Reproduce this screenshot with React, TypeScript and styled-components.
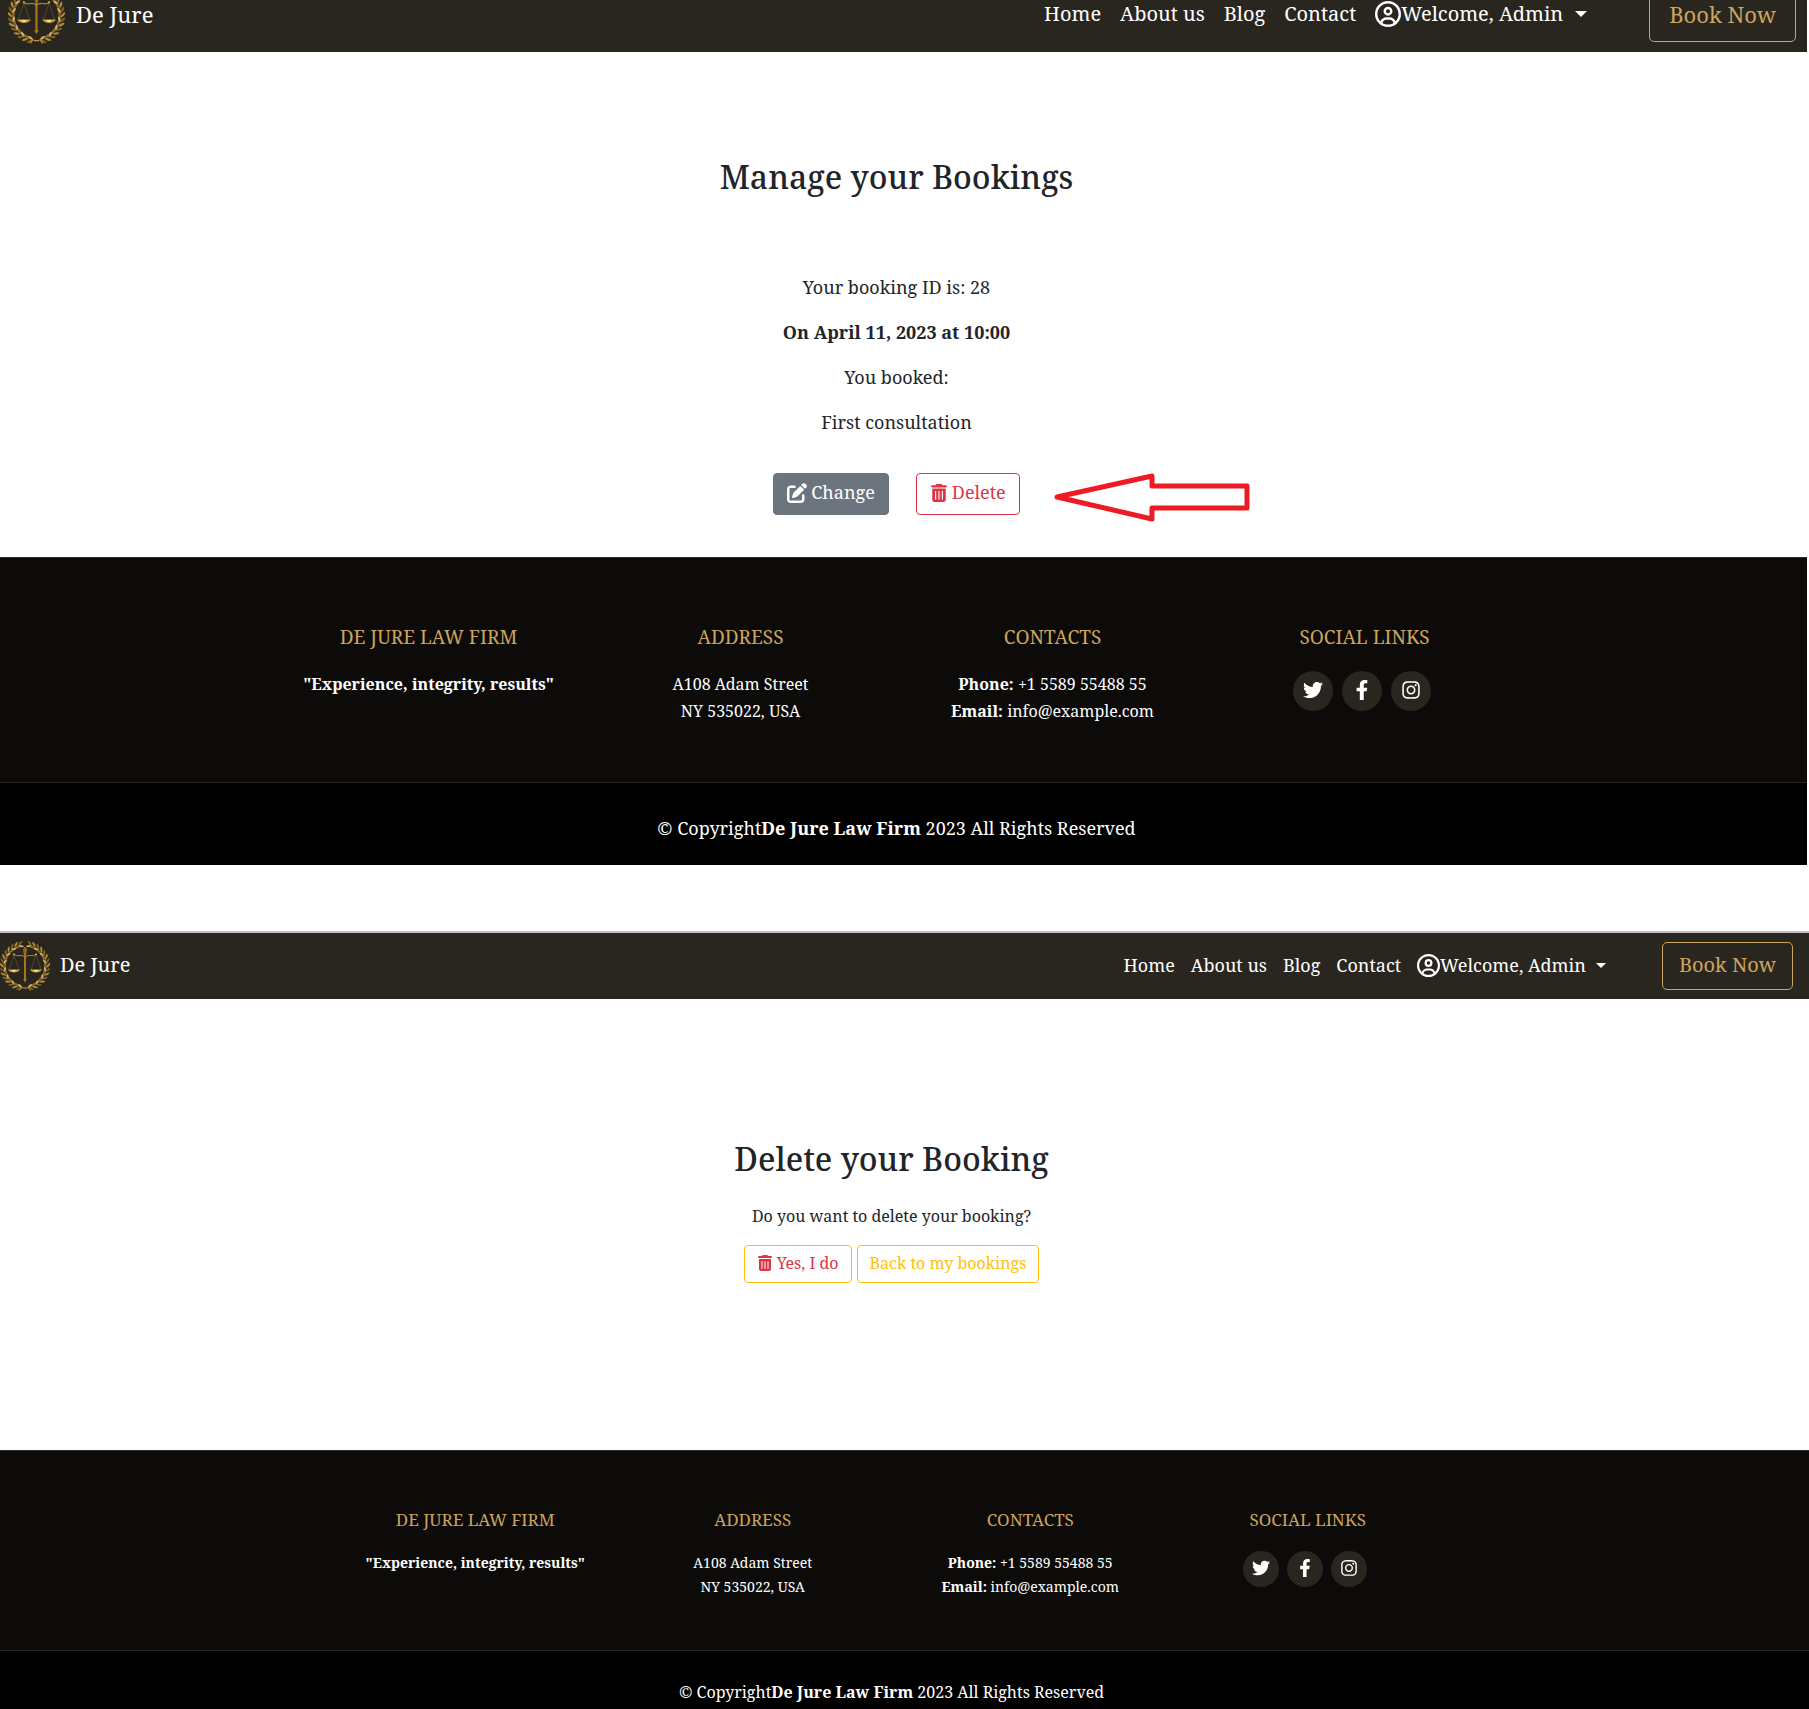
import React from "react";
import styled, { createGlobalStyle, ThemeProvider } from "styled-components";
import { FaPenToSquare, FaRegCircleUser, FaTrashCan } from "react-icons/fa6";
import { FaFacebookF, FaInstagram, FaTwitter } from "react-icons/fa";

const gold = "#cda45e";

const largeSizes = {
  nav: { height: 74, font: 20, brand: 22, logo: 57, brandGap: 11, linkGap: 19, icon: 26, caret: 6, caretGap: 12, userGap: 62, left: 8, right: 11, buttonHeight: 54, buttonPad: 19 },
  body: { font: 18, line: 27, inset: 14 },
  footer: { font: 16, line: 27, heading: 19, headingLine: 24, top: 67, bottom: 57, gap: 22, width: 1248, circle: 40, circleGap: 9, icon: 20, legalTop: 32, legalBottom: 23 },
};

const regularSizes: typeof largeSizes = {
  nav: { height: 66, font: 18, brand: 20, logo: 50, brandGap: 10, linkGap: 16, icon: 23, caret: 5, caretGap: 10, userGap: 56, left: 0, right: 16, buttonHeight: 48, buttonPad: 16 },
  body: { font: 16, line: 24, inset: 26 },
  footer: { font: 14, line: 24, heading: 17, headingLine: 20, top: 59, bottom: 51, gap: 21, width: 1110, circle: 36, circleGap: 8, icon: 18, legalTop: 29, legalBottom: 5 },
};

declare module "styled-components" {
  export interface DefaultTheme {
    nav: typeof largeSizes.nav;
    body: typeof largeSizes.body;
    footer: typeof largeSizes.footer;
  }
}

const GlobalStyle = createGlobalStyle`
  *, *::before, *::after { box-sizing: border-box; }
  body {
    margin: 0;
    background: #fff;
    color: #212529;
    font-family: "Noto Serif", "Liberation Serif", serif;
  }
  h2, h3, p, ul { margin: 0; padding: 0; font-weight: 400; }
  ul { list-style: none; }
  a { color: inherit; text-decoration: none; }
  button { font: inherit; cursor: pointer; }
  svg { display: block; flex: none; }
`;

const Page = styled.div`
  display: flex;
  flex-direction: column;
  gap: 66px;
  overflow-x: hidden;
`;

const Screen = styled.section<{ $scrolled?: boolean; $framed?: boolean }>`
  display: flex;
  flex-direction: column;
  margin-top: ${(p) => (p.$scrolled ? -22 : 0)}px;
  margin-right: ${(p) => (p.$scrolled ? 2 : 0)}px;
  border-top: ${(p) => (p.$framed ? "2px solid #bdbdbd" : "0")};
`;

const NavBar = styled.header`
  display: flex;
  align-items: center;
  justify-content: space-between;
  height: ${(p) => p.theme.nav.height}px;
  padding: 0 ${(p) => p.theme.nav.right}px 0 ${(p) => p.theme.nav.left}px;
  background: #29261f;
  color: #fff;
`;

const Brand = styled.a`
  display: flex;
  align-items: center;
  gap: ${(p) => p.theme.nav.brandGap}px;
  font-size: ${(p) => p.theme.nav.brand}px;
  line-height: 30px;
`;

const BrandName = styled.span`
  padding-bottom: 3px;
`;

const Menu = styled.nav`
  display: flex;
  align-items: center;
  gap: ${(p) => p.theme.nav.linkGap}px;
  font-size: ${(p) => p.theme.nav.font}px;
  line-height: 30px;
`;

const NavLink = styled.a`
  padding-bottom: 2px;
`;

const UserToggle = styled.button`
  display: flex;
  align-items: center;
  margin-right: ${(p) => p.theme.nav.userGap - p.theme.nav.linkGap}px;
  padding: 0 0 2px;
  border: 0;
  background: none;
  color: inherit;
`;

const Caret = styled.span`
  margin-left: ${(p) => p.theme.nav.caretGap}px;
  border: ${(p) => p.theme.nav.caret}px solid transparent;
  border-top-color: #fff;
  border-bottom: 0;
`;

const BookButton = styled.button`
  height: ${(p) => p.theme.nav.buttonHeight}px;
  padding: 0 ${(p) => p.theme.nav.buttonPad}px 3px;
  border: 1px solid ${gold};
  border-radius: 5px;
  background: none;
  color: ${gold};
  font-size: ${(p) => p.theme.nav.brand}px;
`;

const Main = styled.main<{ $top: number; $bottom: number }>`
  display: flex;
  flex-direction: column;
  align-items: center;
  padding: ${(p) => p.$top}px ${(p) => p.theme.body.inset}px ${(p) => p.$bottom}px 0;
  font-size: ${(p) => p.theme.body.font}px;
  line-height: ${(p) => p.theme.body.line}px;
`;

const Title = styled.h2<{ $gap: number }>`
  margin-bottom: ${(p) => p.$gap}px;
  font-size: 32px;
  font-weight: 500;
  line-height: 40px;
`;

const Details = styled.div`
  display: flex;
  flex-direction: column;
  gap: 18px;
  text-align: center;
`;

const Actions = styled.div<{ $top: number; $gap: number }>`
  position: relative;
  display: flex;
  gap: ${(p) => p.$gap}px;
  margin-top: ${(p) => p.$top}px;
`;

const ActionButton = styled.button<{ $ink: string; $line: string; $fill?: string; $roomy?: boolean }>`
  display: flex;
  align-items: center;
  gap: 4px;
  padding: ${(p) => (p.$roomy ? "5px 13px 8px" : "5px 12px 7px")};
  border: 1px solid ${(p) => p.$line};
  border-radius: 4px;
  background: ${(p) => p.$fill ?? "#fff"};
  color: ${(p) => p.$ink};
`;

const Pointer = styled.svg`
  position: absolute;
  top: 0;
  left: calc(100% + 34px);
`;

const Footer = styled.footer`
  background: #0c0b09;
  border-top: 1px solid #2f2d26;
  color: #fff;
  font-size: ${(p) => p.theme.footer.font}px;
  line-height: ${(p) => p.theme.footer.line}px;
  text-align: center;
`;

const FooterTop = styled.div`
  padding: ${(p) => p.theme.footer.top}px ${(p) => p.theme.body.inset}px ${(p) => p.theme.footer.bottom}px 0;
`;

const FooterGrid = styled.div`
  display: grid;
  grid-template-columns: repeat(4, 1fr);
  max-width: ${(p) => p.theme.footer.width}px;
  margin: 0 auto;
`;

const FooterHeading = styled.h3`
  margin-bottom: ${(p) => p.theme.footer.gap}px;
  color: ${gold};
  font-size: ${(p) => p.theme.footer.heading}px;
  line-height: ${(p) => p.theme.footer.headingLine}px;
  text-transform: uppercase;
`;

const SocialList = styled.ul`
  display: flex;
  justify-content: center;
  gap: ${(p) => p.theme.footer.circleGap}px;
  padding-right: 5px;
`;

const SocialLink = styled.a`
  display: flex;
  align-items: center;
  justify-content: center;
  width: ${(p) => p.theme.footer.circle}px;
  height: ${(p) => p.theme.footer.circle}px;
  padding-bottom: 3px;
  border-radius: 50%;
  background: #29261f;
`;

const Legal = styled.p`
  padding: ${(p) => p.theme.footer.legalTop}px ${(p) => p.theme.body.inset}px ${(p) => p.theme.footer.legalBottom}px 0;
  border-top: 1px solid #25231d;
  background: #000;
  font-size: ${(p) => p.theme.body.font}px;
  line-height: ${(p) => p.theme.body.line}px;
`;

/* Laurel wreath: leaf pairs follow each half of a ring, open at the top. */
const leafAngles = Array.from({ length: 15 }, (_, i) => 100 + i * 11);

function Laurel() {
  return (
    <g>
      <path d="M48 93C20 89 6 68 7 45C8 29 17 14 32 6" fill="none" stroke="#6f5219" strokeWidth="1" />
      {leafAngles.map((angle, i) => {
        const a = (angle * Math.PI) / 180;
        const x = 50 + 43 * Math.cos(a);
        const y = 50 + 43 * Math.sin(a);
        return (
          <g key={angle} transform={`translate(${x} ${y}) rotate(${angle + 90})`}>
            <path d="M-2 1Q2 -8 9 -7Q7 -1 -2 1Z" fill={i % 2 ? "#b08a3e" : "#80611f"} />
            <path d="M-2 0Q2 7 9 5Q6 -1 -2 0Z" fill={i % 2 ? "#8a6724" : "#cbb070"} />
          </g>
        );
      })}
    </g>
  );
}

function Logo({ size }: { size: number }) {
  return (
    <svg width={size} height={size} viewBox="0 0 100 100" aria-hidden="true">
      <Laurel />
      <g transform="translate(100 0) scale(-1 1)">
        <Laurel />
      </g>
      <path d="M44 92L39 99M56 92L61 99M45 94L55 94" stroke="#c79a41" strokeWidth="2" fill="none" />
      <path d="M48 24H52L52 76L50 82L48 76Z" fill="#a8731a" />
      <path d="M50 11L54 16L53 26H47L46 16Z" fill="#94661a" />
      <path d="M46 76H54L50 83Z" fill="#a8731a" />
      <path d="M27 26Q32 31 40 29Q47 28 50 33Q53 28 60 29Q68 31 73 26" fill="none" stroke="#b58532" strokeWidth="2" />
      <circle cx="28" cy="27" r="2" fill="#d9ab4e" />
      <circle cx="72" cy="27" r="2" fill="#d9ab4e" />
      <path d="M28 28L18 57M28 28L38 57M72 28L62 57M72 28L82 57" stroke="#7b6233" strokeWidth="1" />
      <path d="M16 57H40Q37 63 28 63Q19 63 16 57ZM60 57H84Q81 63 72 63Q63 63 60 57Z" fill="#cf9d35" />
      <path d="M22 58H33L30 61H26ZM66 58H77L74 61H70Z" fill="#ffe8a0" />
    </svg>
  );
}

function SiteNav({ sizes }: { sizes: typeof largeSizes }) {
  return (
    <NavBar>
      <Brand href="#home">
        <Logo size={sizes.nav.logo} />
        <BrandName>De Jure</BrandName>
      </Brand>
      <Menu aria-label="Main">
        <NavLink href="#home">Home</NavLink>
        <NavLink href="#about">About us</NavLink>
        <NavLink href="#blog">Blog</NavLink>
        <NavLink href="#contact">Contact</NavLink>
        <UserToggle type="button">
          <FaRegCircleUser size={sizes.nav.icon} />
          Welcome, Admin
          <Caret />
        </UserToggle>
        <BookButton type="button">Book Now</BookButton>
      </Menu>
    </NavBar>
  );
}

function SiteFooter({ sizes }: { sizes: typeof largeSizes }) {
  const icon = sizes.footer.icon;
  return (
    <Footer>
      <FooterTop>
        <FooterGrid>
          <div>
            <FooterHeading>De Jure Law Firm</FooterHeading>
            <p>
              <strong>"Experience, integrity, results"</strong>
            </p>
          </div>
          <div>
            <FooterHeading>Address</FooterHeading>
            <p>
              A108 Adam Street
              <br />
              NY 535022, USA
            </p>
          </div>
          <div>
            <FooterHeading>Contacts</FooterHeading>
            <p>
              <strong>Phone:</strong> +1 5589 55488 55
              <br />
              <strong>Email:</strong> info@example.com
            </p>
          </div>
          <div>
            <FooterHeading>Social Links</FooterHeading>
            <SocialList>
              <li>
                <SocialLink href="#twitter" aria-label="Twitter">
                  <FaTwitter size={icon} />
                </SocialLink>
              </li>
              <li>
                <SocialLink href="#facebook" aria-label="Facebook">
                  <FaFacebookF size={icon} />
                </SocialLink>
              </li>
              <li>
                <SocialLink href="#instagram" aria-label="Instagram">
                  <FaInstagram size={icon} />
                </SocialLink>
              </li>
            </SocialList>
          </div>
        </FooterGrid>
      </FooterTop>
      <Legal>
        © Copyright<strong>De Jure Law Firm</strong> 2023 All Rights Reserved
      </Legal>
    </Footer>
  );
}

export default function App() {
  return (
    <Page>
      <GlobalStyle />
      <ThemeProvider theme={largeSizes}>
        <Screen $scrolled>
          <SiteNav sizes={largeSizes} />
          <Main $top={105} $bottom={42}>
            <Title $gap={77}>Manage your Bookings</Title>
            <Details>
              <p>Your booking ID is: 28</p>
              <p>
                <strong>On April 11, 2023 at 10:00</strong>
              </p>
              <p>You booked:</p>
              <p>First consultation</p>
            </Details>
            <Actions $top={37} $gap={27}>
              <ActionButton type="button" $roomy $ink="#fff" $line="#6c757d" $fill="#6c757d">
                <FaPenToSquare size={20} />
                Change
              </ActionButton>
              <ActionButton type="button" $roomy $ink="#dc3545" $line="#dc3545">
                <FaTrashCan size={18} />
                Delete
              </ActionButton>
              <Pointer width="196" height="50" viewBox="0 0 196 50" aria-hidden="true">
                <path
                  d="M3 24L98 3V13H193V35H98V46Z"
                  fill="none"
                  stroke="#ed1c24"
                  strokeWidth="5"
                  strokeLinejoin="round"
                />
              </Pointer>
            </Actions>
          </Main>
          <SiteFooter sizes={largeSizes} />
        </Screen>
      </ThemeProvider>
      <ThemeProvider theme={regularSizes}>
        <Screen $framed>
          <SiteNav sizes={regularSizes} />
          <Main $top={140} $bottom={167}>
            <Title $gap={25}>Delete your Booking</Title>
            <p>Do you want to delete your booking?</p>
            <Actions $top={17} $gap={5}>
              <ActionButton type="button" $ink="#dc3545" $line="#ffc107">
                <FaTrashCan size={16} />
                Yes, I do
              </ActionButton>
              <ActionButton type="button" $ink="#ffc107" $line="#ffc107">
                Back to my bookings
              </ActionButton>
            </Actions>
          </Main>
          <SiteFooter sizes={regularSizes} />
        </Screen>
      </ThemeProvider>
    </Page>
  );
}
